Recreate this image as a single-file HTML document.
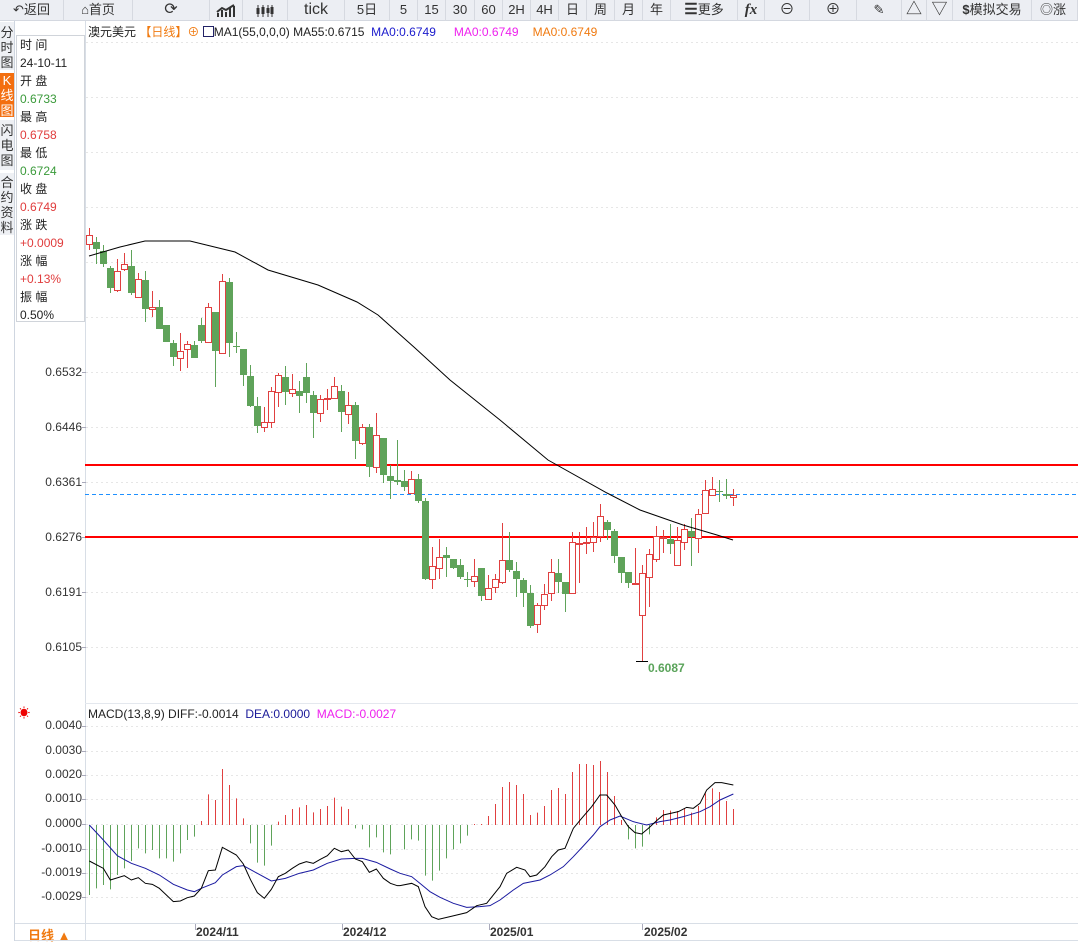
<!DOCTYPE html>
<html><head><meta charset="utf-8"><style>
*{margin:0;padding:0;box-sizing:border-box}
body{width:1078px;height:941px;overflow:hidden;background:#fff;font-family:"Liberation Sans","Noto Sans CJK SC",sans-serif;font-size:12px;color:#222;position:relative}
#tb{position:absolute;left:0;top:0;width:1078px;height:21px;background:#eceef3;border-bottom:1px solid #d4d8e0}
.b{position:absolute;top:0;height:21px;line-height:20px;text-align:center;font-size:13px;color:#333;border-right:1px solid #d6d9e0}
.tabs{position:absolute;left:0;top:22px;width:14px;font-size:13px;line-height:15px;text-align:center;color:#333}
.tabs div{background:#eef0f4;margin-bottom:3px;padding:2px 0}
#info{position:absolute;left:16px;top:35px;width:69px;height:287px;border:1px solid #d0d4da;font-size:12px;line-height:18px;padding:0 0 0 3px}
.g{color:#3a9a3a}.r{color:#e03c3c}
.pl{position:absolute;right:996px;font-size:12px;color:#333}
</style></head><body>
<div id="tb">
<div class="b" style="left:0;width:64px">↶返回</div>
<div class="b" style="left:64px;width:69px">⌂首页</div>
<div class="b" style="left:133px;width:77px;font-size:16px">⟳</div>
<div class="b" style="left:210px;width:33px"><svg width="20" height="14" viewBox="0 0 20 14" style="margin-top:4px"><path d="M2 13V9M6 13V6M10 13V8M14 13V4M18 13V2M1 8L6 4L10 6L18 1" stroke="#333" stroke-width="2" fill="none"/></svg></div>
<div class="b" style="left:243px;width:45px"><svg width="20" height="14" viewBox="0 0 20 14" style="margin-top:4px"><path d="M3 1V13M8 1V13M13 1V13M17 1V13" stroke="#333" stroke-width="1"/><rect x="1.5" y="4" width="3" height="6" fill="#333"/><rect x="6.5" y="3" width="3" height="7" fill="#333"/><rect x="11.5" y="4" width="3" height="5" fill="#333"/><rect x="15.5" y="3" width="3" height="7" fill="#333"/></svg></div>
<div class="b" style="left:288px;width:57px;font-size:16px">tick</div>
<div class="b" style="left:345px;width:45px">5日</div>
<div class="b" style="left:390px;width:28px">5</div>
<div class="b" style="left:418px;width:28px">15</div>
<div class="b" style="left:446px;width:29px">30</div>
<div class="b" style="left:475px;width:28px">60</div>
<div class="b" style="left:503px;width:28px">2H</div>
<div class="b" style="left:531px;width:28px">4H</div>
<div class="b" style="left:559px;width:28px">日</div>
<div class="b" style="left:587px;width:28px">周</div>
<div class="b" style="left:615px;width:28px">月</div>
<div class="b" style="left:643px;width:28px">年</div>
<div class="b" style="left:671px;width:67px"><b style="font-size:15px">☰</b>更多</div>
<div class="b" style="left:738px;width:27px;font-weight:bold;font-style:italic;font-family:'Liberation Serif',serif;font-size:15px">fx</div>
<div class="b" style="left:765px;width:45px;font-size:15px">⊖</div>
<div class="b" style="left:810px;width:47px;font-size:15px">⊕</div>
<div class="b" style="left:857px;width:45px">✎</div>
<div class="b" style="left:902px;width:25px;font-size:16px">△</div>
<div class="b" style="left:927px;width:26px;font-size:16px">▽</div>
<div class="b" style="left:953px;width:79px"><b>$</b>模拟交易</div>
<div class="b" style="left:1032px;width:46px;text-align:left;padding-left:8px">◎<span style="color:#333">涨</span></div>
</div>
<div class="tabs">
<div style="height:48px;padding-top:3px">分时图</div>
<div style="height:44px;background:#f36f10;color:#fff;padding-top:0">K线图</div>
<div style="height:50px;padding-top:3px">闪电图</div>
<div style="height:62px;padding-top:2px">合约资料</div>
</div>
<div style="position:absolute;left:14px;top:21px;width:1px;height:920px;background:#cfd6e0"></div>
<div id="info">
<div>时 间</div><div>24-10-11</div><div>开 盘</div><div class="g">0.6733</div><div>最 高</div><div class="r">0.6758</div><div>最 低</div><div class="g">0.6724</div><div>收 盘</div><div class="r">0.6749</div><div>涨 跌</div><div class="r">+0.0009</div><div>涨 幅</div><div class="r">+0.13%</div><div>振 幅</div><div>0.50%</div>
</div>
<div style="position:absolute;left:88px;top:23px;white-space:nowrap;font-size:12px">澳元美元 <span style="color:#f07a10">【日线】</span><span style="color:#f07a10">⊕</span> <span style="display:inline-block;width:11px;height:11px;border:1px solid #226;vertical-align:-1px"></span>MA1(55,0,0,0) MA55:0.6715 &nbsp;<span style="color:#1a1acc">MA0:0.6749</span><span style="color:#ee22ee;margin-left:18px">MA0:0.6749</span><span style="color:#f07a10;margin-left:14px">MA0:0.6749</span></div>
<div class="pl" style="top:365px">0.6532</div>
<div class="pl" style="top:420px">0.6446</div>
<div class="pl" style="top:475px">0.6361</div>
<div class="pl" style="top:530px">0.6276</div>
<div class="pl" style="top:585px">0.6191</div>
<div class="pl" style="top:640px">0.6105</div>
<div style="position:absolute;left:648px;top:661px;color:#5aa35a;font-weight:bold;font-size:12px">0.6087</div>
<div style="position:absolute;left:18px;top:704px;color:#e00;font-size:12px">☀</div>
<div style="position:absolute;left:88px;top:707px;white-space:nowrap;font-size:12px">MACD(13,8,9) DIFF:-0.0014 &nbsp;<span style="color:#1a1a99">DEA:0.0000</span> &nbsp;<span style="color:#ee22ee">MACD:-0.0027</span></div>
<div class="pl" style="top:718px">0.0040</div>
<div class="pl" style="top:743px">0.0030</div>
<div class="pl" style="top:767px">0.0020</div>
<div class="pl" style="top:791px">0.0010</div>
<div class="pl" style="top:816px">0.0000</div>
<div class="pl" style="top:841px">-0.0010</div>
<div class="pl" style="top:865px">-0.0019</div>
<div class="pl" style="top:889px">-0.0029</div>
<div style="position:absolute;left:28px;top:925px;color:#f07a10;font-weight:bold;font-size:13px">日线 ▲</div>
<div style="position:absolute;left:196px;top:925px;font-weight:bold;color:#333">2024/11</div>
<div style="position:absolute;left:343px;top:925px;font-weight:bold;color:#333">2024/12</div>
<div style="position:absolute;left:490px;top:925px;font-weight:bold;color:#333">2025/01</div>
<div style="position:absolute;left:644px;top:925px;font-weight:bold;color:#333">2025/02</div>
<svg id="s" width="1078" height="941" style="position:absolute;left:0;top:0;pointer-events:none"></svg>
<script>
var s='';
function L(x1,y1,x2,y2,c,w,d){s+='<line x1="'+x1+'" y1="'+y1+'" x2="'+x2+'" y2="'+y2+'" stroke="'+c+'" stroke-width="'+(w||1)+'"'+(d?' stroke-dasharray="'+d+'"':'')+'/>';}
L(85.5,21,85.5,941,'#d8dee6');
L(15,923.5,1078,923.5,'#d8dee6');L(15,940.5,1078,940.5,'#d8dee6');
L(85,703.5,1078,703.5,'#e4e8ee');
[42,97,152,207,262,317,372,427,482,537,592,647].forEach(function(y){L(86,y+.5,1078,y+.5,'#e6e6e6',1,'2,3');});
[726,751,775,799,824,849,873,897].forEach(function(y){L(86,y+.5,1078,y+.5,'#e6e6e6',1,'2,3');});
[372,427,482,537,592,647,726,751,775,799,824,849,873,897].forEach(function(y){L(82,y+.5,86,y+.5,'#aab');});
[195,342,489,642].forEach(function(x){L(x+.5,924,x+.5,930,'#aab');});
L(85,465,1078,465,'#f00',2);L(85,537,1078,537,'#f00',2);
L(85,494.5,1078,494.5,'#1e90ff',1,'4,3');
var C=[[235,244,228,250,1],[242,249,237,264,0],[251,264,245,267,0],[268,288,266,293,0],[271,290,259,292,1],[264,269,253,271,1],[266,293,250,295,0],[279,297,273,297,1],[280,309,271,322,0],[307,309,291,317,1],[307,329,300,329,0],[325,342,325,342,0],[343,357,340,366,0],[351,358,333,371,1],[344,349,341,368,1],[345,358,341,358,0],[325,341,318,343,0],[307,342,303,343,1],[312,351,312,387,0],[281,353,274,353,1],[282,343,278,357,0],[346,347,332,353,0],[349,375,349,386,0],[376,406,365,407,0],[406,426,397,433,0],[422,427,407,432,1],[391,422,387,428,1],[375,392,373,407,1],[377,392,366,405,0],[389,393,374,397,1],[391,396,381,413,0],[377,393,363,403,0],[395,413,391,438,0],[399,413,395,422,1],[398,399,389,410,1],[386,398,377,398,1],[391,412,385,432,0],[405,414,392,424,1],[405,441,402,459,0],[427,443,424,445,1],[427,467,424,477,0],[435,467,413,473,1],[438,475,438,483,0],[476,481,465,499,0],[480,482,440,485,0],[481,487,470,491,0],[479,493,471,493,1],[479,501,474,503,0],[501,579,498,580,0],[566,579,547,589,1],[557,568,539,579,1],[555,558,547,577,0],[559,568,559,569,0],[565,577,559,579,0],[579,580,572,587,0],[576,581,559,587,1],[568,596,568,601,0],[588,599,575,599,1],[579,587,574,593,1],[560,582,523,584,1],[560,570,532,572,0],[571,579,562,597,0],[580,593,578,607,0],[593,626,585,628,0],[605,624,603,633,1],[594,605,584,610,1],[572,593,559,601,1],[573,582,559,593,0],[582,594,582,612,0],[542,593,532,594,1],[543,544,532,583,1],[542,543,527,554,1],[537,542,522,552,1],[516,536,504,542,1],[522,530,520,540,0],[531,556,529,563,0],[557,573,557,583,0],[572,583,572,588,0],[583,584,548,585,1],[573,615,565,661,1],[554,577,549,607,1],[536,559,526,562,1],[537,538,530,553,1],[539,544,524,554,0],[540,565,527,565,1],[529,542,524,550,1],[531,537,518,566,0],[514,538,509,553,1],[490,513,480,513,1],[489,495,477,495,1],[491,492,480,502,0],[494,496,479,499,0],[495,497,489,506,1]];
C.forEach(function(c,i){var x=89+7*i,col=c[4]?'#e04040':'#5fa35a';
L(x+.5,c[2],x+.5,c[3],col);
var h=Math.max(1,c[1]-c[0]);
if(c[4])s+='<rect x="'+(x-2.5)+'" y="'+(c[0]+.5)+'" width="6" height="'+h+'" fill="#fff" stroke="'+col+'"/>';
else s+='<rect x="'+(x-3)+'" y="'+c[0]+'" width="7" height="'+h+'" fill="'+col+'"/>';});
L(636,661.5,648,661.5,'#000');
function P(pts,c,w){s+='<polyline points="'+pts.map(function(p){return p.join(',')}).join(' ')+'" fill="none" stroke="'+c+'" stroke-width="'+(w||1)+'"/>';}
P([[89,256],[120,247],[145,241],[177,241],[190,241],[235,252],[268,270],[318,285],[357,302],[378,315],[415,348],[450,380],[500,420],[548,460],[607,493],[640,510],[683,525],[717,535],[733,540]],'#000');
var Z=825;
var H4=[585,565,555,568,525,505,483,445,460,450,475,475,485,460,420,410,363,283,300,207,255,295,355,430,488,497,437,365,345,327,322,315,337,327,318,293,320,327,385,388,442,412,457,463];
H4.forEach(function(v,i){var x=89+7*i,y=700+v/3;L(x+.5,Z,x+.5,y,y<Z?'#e04040':'#5fa35a');});
var H7=[328,298,302,407,422,392,355,328,310,287,252,252,228,192,141,126,135,162,225,218,198,150,144,162,96,72,72,75,63,96,168,240,298,325,320,283,232,210,212,213,205,218,198,160,145,156,183,207];
H7.forEach(function(v,i){var x=404+7*i,y=740+v/3;L(x+.5,Z,x+.5,y,y<Z?'#e04040':'#5fa35a');});
function m4(a){return a.map(function(p){return [p[0]/3,700+p[1]/3]});}
function m7(a){return a.map(function(p){return [400+p[0]/3,740+p[1]/3]});}
var D4=m4([[268,483],[310,505],[331,540],[373,527],[394,540],[415,533],[436,550],[457,553],[478,565],[520,605],[541,603],[562,593],[583,588],[604,565],[625,512],[646,510],[667,442],[709,465],[730,492],[751,538],[772,578],[793,595],[814,568],[835,530],[856,520],[877,505],[898,492],[919,485],[940,490],[961,478],[982,467],[1003,445],[1024,455],[1045,450],[1066,477],[1087,485],[1108,517],[1129,507],[1150,535],[1171,550],[1192,557]]);
var D7=m7([[0,437],[35,430],[55,440],[75,500],[95,530],[115,538],[150,530],[200,518],[230,497],[260,490],[300,440],[320,400],[350,382],[375,390],[390,410],[410,405],[435,380],[455,350],[475,330],[495,325],[520,265],[545,235],[575,200],[600,165],[620,165],[645,195],[665,230],[685,260],[705,278],[725,282],[745,265],[770,242],[790,225],[835,215],[860,202],[880,205],[900,190],[920,150],[945,128],[965,128],[1000,135]]);
var E4=m4([[268,375],[310,420],[352,467],[394,490],[436,505],[478,525],[520,553],[562,570],[583,575],[604,565],[646,548],[667,525],[709,500],[730,497],[772,520],[814,543],[856,535],[898,520],[940,510],[982,490],[1024,477],[1066,475],[1087,475],[1129,487],[1171,507]]);
var E7=m7([[0,400],[35,410],[60,430],[90,455],[120,472],[160,490],[200,502],[240,500],[270,497],[300,480],[340,450],[370,430],[420,420],[450,405],[490,380],[520,350],[550,318],[580,285],[600,260],[630,240],[660,228],[700,245],[740,255],[760,250],[780,245],[810,240],[850,230],[900,215],[930,200],[960,180],[1000,162]]);
P(E4.concat(E7),'#1a1aa0');
P(D4.concat(D7),'#000');
document.getElementById('s').innerHTML=s;
</script>
</body></html>
